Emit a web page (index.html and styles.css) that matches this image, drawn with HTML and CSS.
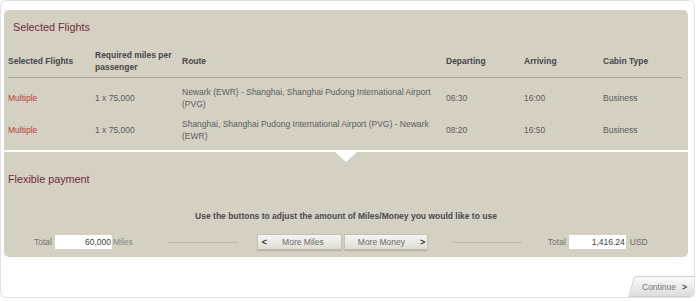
FILE: index.html
```html
<!DOCTYPE html>
<html lang="en">
<head>
  <meta charset="UTF-8">
  <title>Selected Flights</title>
  <link rel="stylesheet" href="styles.css">
</head>
<body>
  <div class="frame">
    <div class="panel">

      <!-- Selected flights table -->
      <div class="flights">
        <h2 class="panel-title">Selected Flights</h2>
        <table class="flight-table">
          <thead>
            <tr>
              <th class="col-flight">Selected Flights</th>
              <th class="col-miles">Required miles per passenger</th>
              <th class="col-route">Route</th>
              <th class="col-dep">Departing</th>
              <th class="col-arr">Arriving</th>
              <th>Cabin Type</th>
            </tr>
          </thead>
          <tbody>
            <tr>
              <td class="multiple">Multiple</td>
              <td>1 x 75,000</td>
              <td class="route">Newark (EWR) - Shanghai, Shanghai Pudong International Airport (PVG)</td>
              <td>06:30</td>
              <td>16:00</td>
              <td>Business</td>
            </tr>
            <tr>
              <td class="multiple">Multiple</td>
              <td>1 x 75,000</td>
              <td class="route">Shanghai, Shanghai Pudong International Airport (PVG) - Newark (EWR)</td>
              <td>08:20</td>
              <td>16:50</td>
              <td>Business</td>
            </tr>
          </tbody>
        </table>
      </div>

      <!-- Flexible payment -->
      <div class="payment">
        <h2 class="panel-title">Flexible payment</h2>
        <p class="hint">Use the buttons to adjust the amount of Miles/Money you would like to use</p>
        <div class="slider-row">
          <div class="amount">
            <span class="label">Total</span>
            <input class="amount-input" type="text" value="60,000">
            <span class="unit">Miles</span>
          </div>
          <div class="rule rule-left"></div>
          <div class="buttons">
            <button class="adjust miles"><span class="arrow">&lt;</span>More Miles</button>
            <button class="adjust money">More Money<span class="arrow">&gt;</span></button>
          </div>
          <div class="rule rule-right"></div>
          <div class="amount amount-right">
            <span class="label">Total</span>
            <input class="amount-input" type="text" value="1,416.24">
            <span class="unit usd">USD</span>
          </div>
        </div>
      </div>
    </div>

    <div class="footer">
      <button class="continue">Continue<span class="arrow">&gt;</span></button>
    </div>
  </div>
</body>
</html>
```

FILE: styles.css
```css
body {
  margin: 0;
  font-family: "Liberation Sans", Arial, sans-serif;
  background-color: #fff;
}

.frame {
  box-sizing: border-box;
  width: 695px;
  height: 298px;
  border: 1px solid #e2e2e2;
  border-radius: 6px;
  overflow: hidden;
  display: flex;
  flex-direction: column;
}

.panel {
  margin: 9px 6px 0 3px;
  background-color: #d4d0c2;
  border-radius: 5px;
}

.panel-title {
  margin: 0;
  padding: 10px 0 0 5px;
  font-size: 10.8px;
  line-height: 14px;
  font-weight: normal;
  color: #6f2c3c;
}

.flights {
  padding: 0 5px 4px 4px;
}

.flight-table {
  width: 674px;
  margin-top: 11px;
  border-collapse: collapse;
  table-layout: fixed;
  font-size: 8.5px;
  line-height: 12px;
}

.flight-table th,
.flight-table td {
  padding: 4px 8px 4px 0;
  text-align: left;
  vertical-align: middle;
}

.flight-table th {
  color: #474747;
  font-weight: bold;
  border-bottom: 1px solid #a9a597;
}

.flight-table td {
  color: #5c5c5c;
}

.flight-table tbody tr:first-child td {
  padding-top: 8px;
}

.col-flight { width: 79px; }
.col-miles { width: 79px; }
.col-route { width: 256px; }
.col-dep { width: 70px; }
.col-arr { width: 71px; }

.flight-table .multiple {
  color: #b5423f;
}

.payment {
  position: relative;
  border-top: 2px solid #fff;
  padding: 6px 0 7px;
}

/* white notch under the divider */
.payment::before {
  content: "";
  position: absolute;
  top: 0;
  left: 50%;
  transform: translateX(-50%);
  border-left: 11px solid transparent;
  border-right: 11px solid transparent;
  border-top: 10px solid #fff;
}

.payment .panel-title {
  padding: 14px 0 0 4px;
}

.hint {
  margin: 24px 0 0;
  text-align: center;
  font-size: 8.5px;
  line-height: 12px;
  font-weight: bold;
  color: #4a4a4a;
}

.slider-row {
  display: flex;
  align-items: center;
  height: 16px;
  margin-top: 12px;
  padding-left: 30px;
  font-size: 8.5px;
}

.amount {
  display: flex;
  align-items: center;
  gap: 3px;
}

.label {
  color: #737373;
}

.unit {
  color: #868686;
  margin-left: -2px;
}

.unit.usd {
  margin-left: 1px;
  color: #6e6e6e;
}

.amount-input {
  box-sizing: border-box;
  width: 57px;
  height: 14px;
  padding: 0 1px 0 0;
  border: none;
  background: #fff;
  text-align: right;
  font-family: inherit;
  font-size: 8.5px;
  color: #3d3d3d;
}

.rule {
  width: 70px;
  height: 1px;
  background-color: #bcb8aa;
}

.rule-left {
  margin-left: 35px;
}

.rule-right {
  margin-left: 24px;
}

.buttons {
  display: flex;
  gap: 2px;
  margin-left: 19px;
}

.adjust {
  box-sizing: border-box;
  display: flex;
  align-items: center;
  gap: 15px;
  height: 16px;
  padding: 0;
  border: 1px solid #c3c0b4;
  border-radius: 1px;
  background: linear-gradient(#f6f5f2, #dedcd4);
  box-shadow: 0 1px 1px rgba(0, 0, 0, 0.18);
  font-family: inherit;
  font-size: 8.5px;
  color: #6a6a6a;
}

.adjust.miles {
  width: 85px;
  padding-left: 4px;
}

.adjust.money {
  width: 84px;
  padding-left: 13px;
}

.arrow {
  font-weight: bold;
  color: #333;
  font-size: 9px;
}

.amount-right {
  margin-left: 26px;
}

.footer {
  display: flex;
  justify-content: flex-end;
  margin-top: 19px;
}

.continue {
  position: relative;
  z-index: 0;
  display: flex;
  align-items: center;
  gap: 6px;
  width: 66px;
  height: 21px;
  padding: 0 0 0 14px;
  border: none;
  background: none;
  font-family: inherit;
  font-size: 8.5px;
  color: #777;
}

.continue::before {
  content: "";
  position: absolute;
  z-index: -1;
  top: 0;
  left: 0;
  width: 80px;
  height: 100%;
  box-sizing: border-box;
  border: 1px solid #cfcfcf;
  border-radius: 2px 0 0 0;
  background: linear-gradient(#fbfbfb, #dcdcdc);
  transform-origin: bottom left;
  transform: skewX(-17deg);
}

.continue .arrow {
  font-size: 8.5px;
  color: #444;
}
```
